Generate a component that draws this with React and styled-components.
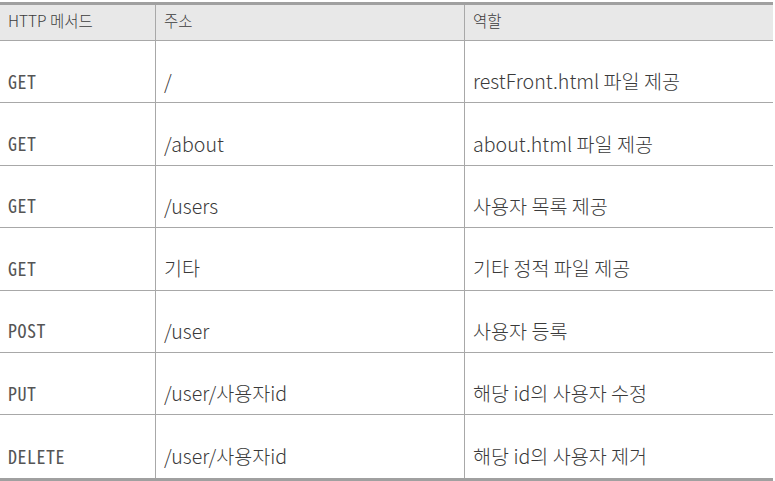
import styled, { createGlobalStyle } from 'styled-components';

const GlobalStyle = createGlobalStyle`
  body {
    margin: 0;
    background: #fff;
    font-family: "Noto Sans CJK KR", "Noto Sans", sans-serif;
  }
`;

const Table = styled.div`
  width: 773px;
  margin-top: 2px;
  display: grid;
  grid-template-columns: 155px 309px 1fr;
  border-top: 3px solid #a0a0a0;
  border-bottom: 3px solid #a0a0a0;
  color: #3a3a3a;
`;

const HeadCell = styled.div`
  height: 36px;
  display: flex;
  align-items: center;
  padding: 0 0 5px 8px;
  box-sizing: border-box;
  background: #e8e8e8;
  font-size: 15.5px;
  font-weight: 300;
  color: #3c3c3c;
  border-bottom: 1px solid #a8a8a8;
  border-left: ${(p) => (p.first ? 'none' : '1px solid #a8a8a8')};
`;

const Cell = styled.div`
  height: 62.4px;
  display: flex;
  align-items: center;
  padding: 18px 0 0 8px;
  box-sizing: border-box;
  font-size: ${(p) => (p.mono ? '18px' : '19.6px')};
  font-family: ${(p) =>
    p.mono
      ? '"Noto Sans Mono CJK KR", "Liberation Mono", monospace'
      : '"Noto Sans CJK KR", sans-serif'};
  font-weight: 300;
  letter-spacing: ${(p) => (p.mono ? '0.5px' : '0')};
  color: ${(p) => (p.mono ? '#555' : '#3a3a3a')};
  border-left: ${(p) => (p.mono ? 'none' : '1px solid #a8a8a8')};
  border-bottom: ${(p) => (p.last ? 'none' : '1px solid #a8a8a8')};
`;

const rows = [
  ['GET', '/', 'restFront.html 파일 제공'],
  ['GET', '/about', 'about.html 파일 제공'],
  ['GET', '/users', '사용자 목록 제공'],
  ['GET', '기타', '기타 정적 파일 제공'],
  ['POST', '/user', '사용자 등록'],
  ['PUT', '/user/사용자id', '해당 id의 사용자 수정'],
  ['DELETE', '/user/사용자id', '해당 id의 사용자 제거'],
];

export default function App() {
  return (
    <>
      <GlobalStyle />
      <Table>
        <HeadCell first>HTTP 메서드</HeadCell>
        <HeadCell>주소</HeadCell>
        <HeadCell>역할</HeadCell>
        {rows.map((r, i) => {
          const last = i === rows.length - 1;
          return [
            <Cell key={`m${i}`} mono last={last}>{r[0]}</Cell>,
            <Cell key={`a${i}`} last={last}>{r[1]}</Cell>,
            <Cell key={`r${i}`} last={last}>{r[2]}</Cell>,
          ];
        })}
      </Table>
    </>
  );
}
